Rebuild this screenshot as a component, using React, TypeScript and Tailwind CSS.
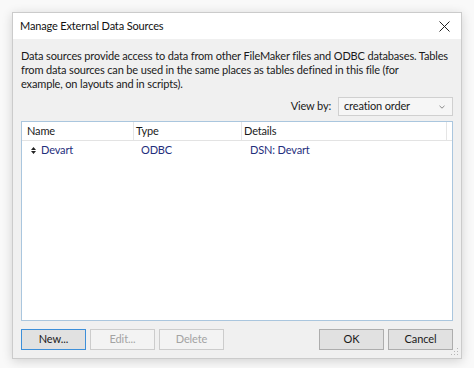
import React from "react";

const font = { fontFamily: 'Lato, "Noto Sans", sans-serif' };

function Btn({ label, variant }: { label: string; variant: "default" | "normal" | "disabled" }) {
  const cls =
    variant === "default"
      ? "border-[#3d8fd9] bg-[#e1e1e1] text-[#1a1a1a]"
      : variant === "normal"
      ? "border-[#adadad] bg-[#e1e1e1] text-[#1a1a1a]"
      : "border-[#cccccc] bg-[#f3f3f3] text-[#a3a3a3]";
  return (
    <div className={`flex h-[21px] w-[65px] items-center justify-center border text-[11px] tracking-[-0.1px] ${cls}`}>
      {label}
    </div>
  );
}

export default function App() {
  return (
    <div className="h-[368px] w-[474px] overflow-hidden bg-[#f9f9f9] pl-[12px] pt-[12px]" style={font}>
      <div className="relative flex h-[347px] w-[450px] flex-col border border-[#cbcbcb] bg-[#f0f0f0] shadow-[0_2px_10px_rgba(0,0,0,0.16)]">
        {/* title bar */}
        <div className="flex h-[26px] shrink-0 items-center justify-between bg-white pl-[7px] pr-[11px]">
          <span className="whitespace-nowrap text-[11px] tracking-[-0.15px] text-[#111]">Manage External Data Sources</span>
          <svg width="11" height="11" viewBox="0 0 11 11">
            <path d="M0.5 0.5 L10.5 10.5 M10.5 0.5 L0.5 10.5" stroke="#222" strokeWidth="1" fill="none" />
          </svg>
        </div>
        {/* body */}
        <div className="flex flex-1 flex-col px-[8px] pt-[10px]">
          <div className="whitespace-nowrap text-[11px] leading-[14px] tracking-[-0.15px] text-[#1a1a1a]">
            <div>Data sources provide access to data from other FileMaker files and ODBC databases. Tables</div>
            <div>from data sources can be used in the same places as tables defined in this file (for</div>
            <div>example, on layouts and in scripts).</div>
          </div>
          <div className="mt-[6px] flex items-center justify-end gap-[7px]">
            <span className="text-[11px] tracking-[-0.15px] text-[#1a1a1a]">View by:</span>
            <div className="flex h-[19px] w-[115px] items-center justify-between border border-[#d0d0d0] bg-[#f6f6f6] pl-[5px] pr-[7px]">
              <span className="whitespace-nowrap text-[11px] tracking-[-0.15px] text-[#1a1a1a]">creation order</span>
              <svg width="6" height="4" viewBox="0 0 6 4">
                <path d="M0.5 0.8 L3 3.2 L5.5 0.8" stroke="#8a8a8a" strokeWidth="1" fill="none" />
              </svg>
            </div>
          </div>
          {/* list */}
          <div className="mt-[5px] flex h-[200px] shrink-0 flex-col border border-[#aac6de] bg-white">
            <div className="flex h-[19px] border-b border-[#e3e3e3] text-[11px] tracking-[-0.15px] text-[#1a1a1a]">
              <div className="flex w-[112px] items-center border-r border-[#e5e5e5] pl-[5px]">Name</div>
              <div className="flex w-[108px] items-center border-r border-[#e5e5e5] pl-[2px]">Type</div>
              <div className="flex w-[205px] items-center border-r border-[#e5e5e5] pl-[2px]">Details</div>
            </div>
            <div className="flex h-[18px] items-center text-[11px] tracking-[-0.15px] text-[#1f2f7d]">
              <div className="flex w-[112px] items-center pl-[9px]">
                <svg width="5" height="7" viewBox="0 0 5 7" className="mr-[5px]">
                  <path d="M2.5 0 L5 3 L0 3 Z M2.5 7 L5 4 L0 4 Z" fill="#222" />
                </svg>
                Devart
              </div>
              <div className="w-[108px] pl-[7px]">ODBC</div>
              <div className="pl-[8px]">DSN: Devart</div>
            </div>
          </div>
          {/* buttons */}
          <div className="mt-[8px] flex items-center">
            <Btn label="New..." variant="default" />
            <div className="ml-[4px]">
              <Btn label="Edit..." variant="disabled" />
            </div>
            <div className="ml-[4px]">
              <Btn label="Delete" variant="disabled" />
            </div>
            <div className="ml-auto">
              <Btn label="OK" variant="normal" />
            </div>
            <div className="ml-[4px]">
              <Btn label="Cancel" variant="normal" />
            </div>
          </div>
        </div>
        {/* size grip */}
        <svg width="8" height="8" viewBox="0 0 8 8" className="absolute bottom-[2px] right-[2px]">
          <rect x="6" y="0" width="1" height="1" fill="#b5b5b5" />
          <rect x="3" y="3" width="1" height="1" fill="#b5b5b5" />
          <rect x="6" y="3" width="1" height="1" fill="#b5b5b5" />
          <rect x="0" y="6" width="1" height="1" fill="#b5b5b5" />
          <rect x="3" y="6" width="1" height="1" fill="#b5b5b5" />
          <rect x="6" y="6" width="1" height="1" fill="#b5b5b5" />
        </svg>
      </div>
    </div>
  );
}
